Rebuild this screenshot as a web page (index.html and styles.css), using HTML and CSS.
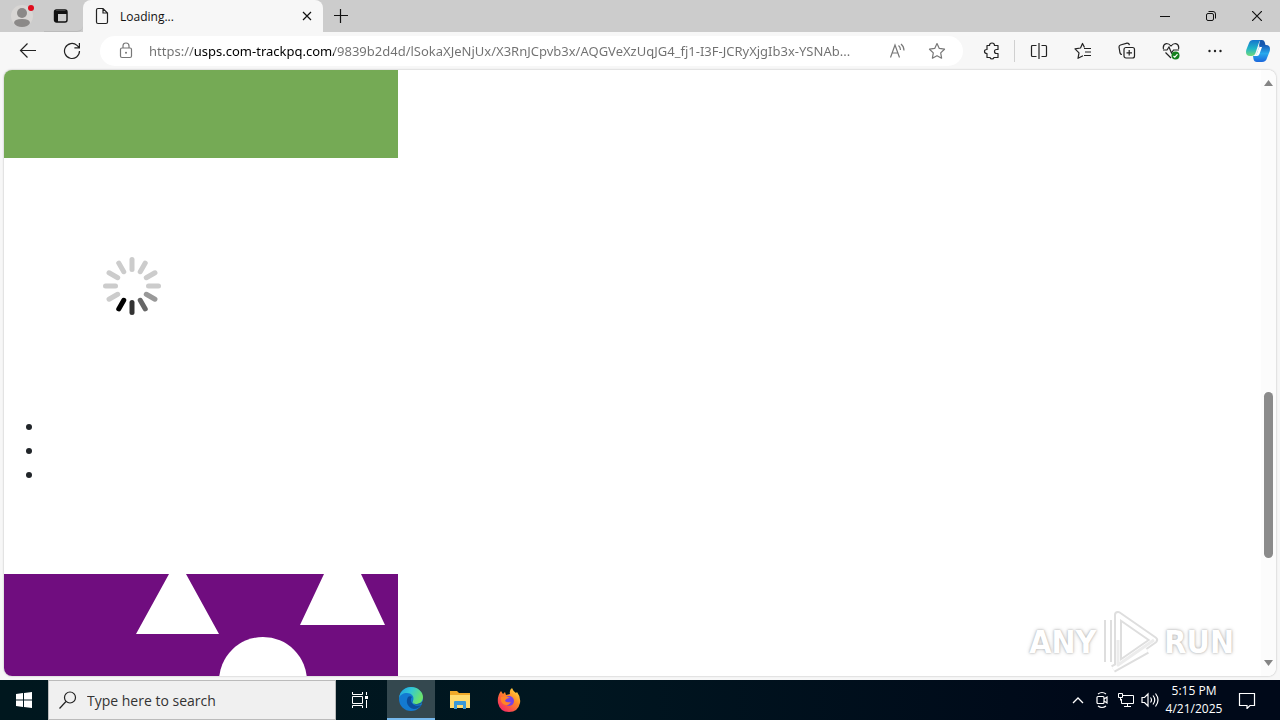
FILE: index.html
```html
<!DOCTYPE html>
<html lang="en">
<head>
<meta charset="utf-8">
<title>Loading...</title>
<link rel="stylesheet" href="styles.css">
</head>
<body>
<header class="tabstrip">
  <button class="profile" aria-label="Profile"><svg width="24" height="24" viewBox="0 0 24 24"><circle cx="11" cy="12" r="11" fill="#d8d6d4"/><circle cx="11" cy="9" r="5" fill="#8b8988"/><path d="M3 19q0-4 8-4t8 4q-2 4-8 4t-8-4" fill="#8b8988"/><circle cx="20" cy="4" r="3" fill="#e00b1c"/></svg></button>
  <button class="tab-menu" aria-label="Tab actions"><svg width="16" height="16" viewBox="0 0 16 16"><rect x="1.500" y="2" width="12.500" height="12" rx="2" fill="none" stroke="#111" stroke-width="1.400"/><path d="M2 3h12v3H5v8H2z" fill="#111"/></svg></button>
  <div class="tab">
    <svg width="14" height="18" viewBox="0 0 14 18" fill="none" stroke="#222" stroke-width="1.200"><path d="M3 1.500h5l4.500 4.500v9q0 1.500-1.500 1.500H3q-1.500 0-1.500-1.500V3q0-1.500 1.500-1.500zM8 1.500V6h4.500"/></svg>
    <span class="tab-title">Loading...</span>
    <button class="tab-close" aria-label="Close tab"><svg width="10" height="10" viewBox="0 0 10 10" stroke="#111" stroke-width="1.200"><path d="M1 1l8 8M9 1l-8 8"/></svg></button>
  </div>
  <button class="new-tab" aria-label="New tab"><svg width="14" height="14" viewBox="0 0 14 14" stroke="#111" stroke-width="1.200"><path d="M6.500 0v14M0 6.500h14"/></svg></button>
  <div class="window-controls">
    <button aria-label="Minimize"><svg width="10" height="10" viewBox="0 0 10 10" stroke="#111"><path d="M0 5.500h10"/></svg></button>
    <button aria-label="Restore"><svg width="10" height="10" viewBox="0 0 10 10" stroke="#111" fill="none"><rect x=".5" y="2.500" width="7" height="7" rx="1.500"/><path d="M2.500 .5H7q2.500 0 2.500 2.500v4.500"/></svg></button>
    <button aria-label="Close"><svg width="10" height="10" viewBox="0 0 10 10" stroke="#111" stroke-width="1.200"><path d="M0 0l10 10M10 0L0 10"/></svg></button>
  </div>
</header>
<nav class="toolbar">
  <button class="nav-button" aria-label="Back"><svg width="18" height="16" viewBox="0 0 18 16" fill="none" stroke="#222" stroke-width="1.200"><path d="M17 7.500H1.500M8.500 .5l-7 7 7 7"/></svg></button>
  <button class="nav-button" aria-label="Refresh"><svg width="18" height="18" viewBox="0 0 18 18" fill="none" stroke="#222" stroke-width="1.200"><path d="M16.500 9A7.500 7.500 0 1 1 14 3.400l2 2M16.400 1v4.800h-5"/></svg></button>
  <div class="address">
    <svg width="14" height="17" viewBox="0 0 14 17" fill="none" stroke="#777" stroke-width="1.200"><rect x="1.500" y="6" width="11" height="9.500" rx="1.500"/><path d="M4 6V4q0-3 3-3t3 3v2"/><circle cx="7" cy="10.700" r="1" fill="#777" stroke="none"/></svg>
    <input class="url" type="text" aria-label="Address" value="https://usps.com-trackpq.com/9839b2d4d/lSokaXJeNjUx/X3RnJCpvb3x/AQGVeXzUqJG4_fj1-I3F-JCRyXjgIb3x-YSNAb...">
    <button aria-label="Read aloud"><svg width="18" height="16" viewBox="0 0 18 16" fill="none" stroke="#777" stroke-width="1.200"><path d="M1.500 14.500L6 2l4.500 12.500M3 10h6M9.500 2.500q2 1.500 2 4.500M12 1q3 2.500 3 6.500"/></svg></button>
    <button aria-label="Favorite"><svg width="18" height="18" viewBox="0 0 18 18" fill="none" stroke="#777" stroke-width="1.200" stroke-linejoin="round"><path d="M9 1.500l2.300 4.900 5.200.8-3.800 3.700.9 5.300L9 13.700l-4.600 2.500.9-5.300-3.800-3.700 5.200-.8z"/></svg></button>
  </div>
  <div class="tools">
    <button class="puzzle" aria-label="Extensions"><svg width="18" height="18" viewBox="0 0 18 18" fill="none" stroke="#222" stroke-width="1.200" stroke-linejoin="round"><path d="M4 3.500h2.500q0-2.500 2.500-2.500t2.500 2.500H15v4h-1.500q-2 0-2 2t2 2H15v4h-4q-.5 1.500-2 1.500t-2-1.500H4v-4q-2.500 0-2.500-2t2.500-2z"/></svg></button>
    <button aria-label="Split screen"><svg width="18" height="18" viewBox="0 0 18 18" fill="none" stroke="#222" stroke-width="1.200"><path d="M6.500 3.500h-4q-1 0-1 1v9q0 1 1 1h4M11.500 3.500h4q1 0 1 1v9q0 1-1 1h-4M9 1v16"/></svg></button>
    <button aria-label="Favorites"><svg width="18" height="18" viewBox="0 0 18 18" fill="none" stroke="#222" stroke-width="1.200" stroke-linejoin="round"><path d="M10.500 5.500L8.500 1.500 6.500 6l-5.500.8 4 4-1 5.500 5-2.500M10 6.500h7M11 10h6M10 13.500h7"/></svg></button>
    <button aria-label="Collections"><svg width="18" height="18" viewBox="0 0 18 18" fill="none" stroke="#222" stroke-width="1.200"><path d="M4 12.500q-1.500 0-2-1.500L1 5q0-1.500 1.500-2L9 1.200q2-.2 2.500 2"/><rect x="6" y="5.500" width="10.500" height="10.500" rx="2"/><path d="M11.200 8v5.600M8.500 10.800H14"/></svg></button>
    <button aria-label="Browser essentials"><svg width="18" height="18" viewBox="0 0 18 18" fill="none" stroke="#222" stroke-width="1.200"><path d="M1.500 7q-1-4.500 3-5.500 2.500 0 4.500 2.500 2-2.500 4.500-2.500 4 1 3 5.500M3.500 10.500L9 16M1 8h4l2-3 2.500 6 2-3H17"/><circle cx="13.500" cy="13.500" r="4" fill="#15801d" stroke="none"/><path d="M11.500 14l1.300 1.200 2.700-3" stroke="#fff"/></svg></button>
    <button aria-label="Settings and more"><svg width="18" height="18" viewBox="0 0 18 18" fill="#222"><circle cx="3.500" cy="9" r="1.200"/><circle cx="9" cy="9" r="1.200"/><circle cx="14.500" cy="9" r="1.200"/></svg></button>
  </div>
  <button class="copilot" aria-label="Copilot"><svg width="24" height="24" viewBox="0 0 24 24"><defs><linearGradient id="cp1" x2="0" y2="1"><stop stop-color="#1675ce"/><stop offset=".55" stop-color="#22b6c7"/><stop offset="1" stop-color="#73da79"/></linearGradient><linearGradient id="cp2" x2="0" y2="1"><stop stop-color="#1659b7"/><stop offset=".5" stop-color="#28a9ed"/><stop offset="1" stop-color="#1b67dc"/></linearGradient></defs><path d="M14 6h6q4 0 4 4 0 2-1 4l-2 5q-1 4-5 4h-5q-3 0-3.500-3L7 17h3z" fill="url(#cp2)"/><path d="M14 1h2q2 0 2.700 2l.8 3h-4q-2 0-2.700 2z" fill="#1556ad"/><path d="M7 1h8q-2 1-2.500 4L9.500 14q-1 3-4 3H4q-4 0-4-4 0-2 1-4l2-5q1-3 4-3z" fill="url(#cp1)"/><path d="M14 8h2l-2.500 7q-.7 2-2.500 2H8q2 0 2.700-2l1.800-5q.5-2 1.500-2z" fill="#fff"/></svg></button>
</nav>
<div class="view">
  <main class="page">
    <div class="banner"></div>
    <div class="loading" role="img" aria-label="Loading">
      <svg width="60" height="60" viewBox="-30 -30 60 60" stroke-width="5" stroke-linecap="round" stroke="#ccc"><path d="M0-26.500v10"/><path d="M0-26.500v10" transform="rotate(30)"/><path d="M0-26.500v10" transform="rotate(60)"/><path d="M0-26.500v10" transform="rotate(90)"/><path d="M0-26.500v10" transform="rotate(120)" stroke="#999"/><path d="M0-26.500v10" transform="rotate(150)" stroke="#666"/><path d="M0-26.500v10" transform="rotate(180)" stroke="#333"/><path d="M0-26.500v10" transform="rotate(210)" stroke="#000"/><path d="M0-26.500v10" transform="rotate(240)"/><path d="M0-26.500v10" transform="rotate(270)"/><path d="M0-26.500v10" transform="rotate(300)"/><path d="M0-26.500v10" transform="rotate(330)"/></svg>
    </div>
    <ul class="links"><li></li><li></li><li></li></ul>
    <div class="shapes"><svg width="394" height="102" viewBox="0 0 394 102" fill="#fff"><path d="M165 0h17l33 60h-83zM320 0h37l24 51h-85z"/><circle cx="259" cy="107" r="44"/></svg></div>
  </main>
  <div class="scrollbar">
    <svg width="9" height="6" viewBox="0 0 9 6" fill="#858585"><path d="M0 6L4.500 0 9 6z"/></svg>
    <div class="track"><div class="thumb"></div></div>
    <svg width="9" height="6" viewBox="0 0 9 6" fill="#858585"><path d="M0 0h9L4.500 6z"/></svg>
  </div>
  <div class="watermark"><span>ANY</span><svg width="60" height="64" viewBox="0 0 60 64" fill="none" stroke-linejoin="round"><g stroke="#dedede" stroke-width="8"><path d="M18 5l36 25-36 25zM8 10v42M13 59l34-19"/></g><g stroke="#fff" stroke-width="4"><path d="M18 5l36 25-36 25zM8 10v42M13 59l34-19"/></g><path d="M18 30v25l36-25" stroke="#ececec" stroke-width="3"/></svg><span>RUN</span></div>
</div>
<footer class="taskbar">
  <button class="start" aria-label="Start"><svg width="16" height="16" viewBox="0 0 16 16" fill="#fff"><path d="M0 2l7-1v6.500H0zM8 1l8-1v7.500H8zM0 8.500h7V15l-7-1zM8 8.500h8V16l-8-1z"/></svg></button>
  <label class="search"><svg width="18" height="18" viewBox="0 0 18 18" fill="none" stroke="#222" stroke-width="1.200"><circle cx="11" cy="6.500" r="5.500"/><path d="M7 10.500l-6.500 7"/></svg><input type="text" placeholder="Type here to search" aria-label="Search"></label>
  <button class="task" aria-label="Task view"><svg width="18" height="18" viewBox="0 0 18 18" fill="none" stroke="#fff" stroke-width="1"><path d="M1.500 1v2.500h10V1M1.500 17v-2.500h10V17M1.500 5.500v7h10v-7zM15.500 1v3M15.500 9v8"/><path d="M14 5h3v3h-3z" fill="#fff" stroke="none"/></svg></button>
  <button class="task active" aria-label="Microsoft Edge"><svg width="24" height="24" viewBox="0 0 24 24"><defs><linearGradient id="eg" x2="1" y2=".4"><stop stop-color="#1d9fe3"/><stop offset=".5" stop-color="#33c8d5"/><stop offset="1" stop-color="#6be36c"/></linearGradient></defs><circle cx="12" cy="12" r="12" fill="#137ad1"/><path d="M0 11C1 4 6 0 12 0c7 0 12 5 12 10 0 5-4 7-7 7-3 0-4-1-3-3 2-5-2-8-6-8-4 0-7 2-8 5z" fill="url(#eg)"/><path d="M9 10c-3 5 0 11 6 12 3 0 6-2 7-4-4 2-9 0-10-4-.3-2 0-3 1-4-1-1-3-1-4 0z" fill="#0b4e9c"/><path d="M14 13q-1 4 4 4.500 3 0 5-1.500l2 2v-7q-1 6-7 6-4 0-4-2z" fill="#34484f"/></svg></button>
  <button class="task" aria-label="File Explorer"><svg width="22" height="20" viewBox="0 0 22 20"><path d="M1 1h7l2 2h11v15H1z" fill="#f0a928"/><path d="M1 5h20v13H1z" fill="#ffda6d"/><path d="M5 19v-7q0-1 1-1h10q1 0 1 1v7h-3v-4H8v4z" fill="#3998d7"/></svg></button>
  <button class="task" aria-label="Firefox"><svg width="24" height="24" viewBox="0 0 24 24"><defs><linearGradient id="ff" x1="1" x2=".2" y2="1"><stop stop-color="#fff04a"/><stop offset=".45" stop-color="#ff8a25"/><stop offset="1" stop-color="#f42468"/></linearGradient></defs><path d="M4 3l2 3 2-2 1 3 4-1q-1-4 2-6 1 3 4 5l1-1q4 5 3 11-2 9-11 9T1 15Q0 8 4 3z" fill="url(#ff)"/><circle cx="12" cy="13" r="5" fill="#7542e5"/><path d="M4 9q5-2 9 1-4 0-5 3 2 2 6 1-3 5-8 2-3-3-2-7z" fill="#ff8427"/></svg></button>
  <div class="tray">
    <button aria-label="Show hidden icons"><svg width="12" height="8" viewBox="0 0 12 8" fill="none" stroke="#fff" stroke-width="1.300"><path d="M1 7l5-5 5 5"/></svg></button>
    <button aria-label="Meet now"><svg width="14" height="18" viewBox="0 0 14 18" fill="none" stroke="#fff" stroke-width="1.200"><rect x="2" y="5.500" width="7" height="7" rx="1"/><path d="M9 8l3-2v6l-3-2M3 3q4-3 8 0M3 15q4 3 8 0"/></svg></button>
    <button aria-label="Network"><svg width="18" height="16" viewBox="0 0 18 16" fill="none" stroke="#fff" stroke-width="1"><path d="M6 3.500h10.500v8h-12V7M10.500 11.500v3M7 14.500h7M1.500 1.500h4v4h-4zM3.500 5.500v3"/></svg></button>
    <button aria-label="Volume"><svg width="18" height="16" viewBox="0 0 18 16" fill="none" stroke="#fff" stroke-width="1.200"><path d="M1 5.500h2.500L7 2v12l-3.500-3.500H1zM9.500 5.500q2 2.500 0 5M12 3.500q3.500 4.500 0 9M14.500 1.500q5 6.500 0 13"/></svg></button>
    <time class="clock" datetime="2025-04-21T17:15"><span>5:15 PM</span><span>4/21/2025</span></time>
    <button class="notifications" aria-label="Notifications"><svg width="18" height="17" viewBox="0 0 18 17" fill="none" stroke="#fff" stroke-width="1.200"><path d="M1.500 1.500h15v12H12l-3 3v-3H1.500z"/></svg></button>
  </div>
</footer>
</body>
</html>
```
FILE: styles.css
```css
* { box-sizing: border-box; }
body {
  margin: 0;
  height: 100vh;
  display: flex;
  flex-direction: column;
  overflow: hidden;
  background: #f7f7f7;
  color: #111;
  font-family: "Noto Sans", "Open Sans", sans-serif;
  font-size: 12px;
}
button {
  display: flex;
  align-items: center;
  justify-content: center;
  padding: 0;
  border: 0;
  background: none;
}
svg { display: block; flex: none; }
input { font-family: inherit; border: 0; outline: 0; min-width: 0; }

.tabstrip { display: flex; height: 32px; background: #ccc; flex: none; }
.profile { width: 44px; padding-left: 2px; }
.tab-menu { width: 39px; padding-right: 6px; border-bottom: 1px solid #bbb; border-radius: 0 0 6px 0; }
.tab {
  display: flex;
  align-items: center;
  width: 240px;
  padding: 0 10px 0 12px;
  gap: 11px;
  background: #f7f7f7;
  border-radius: 8px 8px 0 0;
}
.tab-title { flex: 1; font-family: "Open Sans", sans-serif; }
.tab-close { width: 12px; height: 20px; }
.new-tab { width: 36px; }
.window-controls { display: flex; margin-left: auto; }
.window-controls button { width: 46px; }

.toolbar { display: flex; align-items: center; height: 38px; flex: none; padding: 0 1px 1px 6px; }
.nav-button { width: 44px; height: 32px; }
.address {
  flex: 1;
  display: flex;
  align-items: center;
  height: 30px;
  margin-left: 6px;
  padding: 0 17px 0 19px;
  border-radius: 15px;
  background: #fff;
}
.url {
  flex: 1;
  margin-left: 16px;
  padding: 0;
  font-size: 13px;
  line-height: 20px;
  color: #666;
  -webkit-text-fill-color: transparent;
  background: linear-gradient(90deg, #707070 45px, #000 45px, #000 185px, #707070 185px);
  -webkit-background-clip: text;
  background-clip: text;
}
.address button { width: 18px; margin-left: 21px; }
.address .url + button { margin-left: 14px; }
.tools { display: flex; margin-left: 6px; }
.tools button { width: 44px; height: 22px; }
.tools .puzzle { width: 46px; margin-right: 2px; border-right: 1px solid #d0d0d0; }
.copilot { width: 42px; }

.view {
  position: relative;
  flex: 1;
  min-height: 0;
  display: flex;
  margin: 0 4px 4px;
  border-radius: 8px;
  background: #fff;
  box-shadow: 0 0 2px #aaa;
  overflow: hidden;
}
.page { flex: 1; overflow: hidden; }
.banner { width: 394px; height: 88px; background: #75aa55; }
.loading { padding: 98px; }
.links {
  margin: 0;
  padding: 0 0 0 40px;
  font-size: 16px;
  line-height: 24px;
  color: #212529;
}
.links li { height: 24px; }
.shapes { width: 394px; margin-top: 88px; background: #700d7f; }
.scrollbar {
  width: 15px;
  padding: 10px 0;
  display: flex;
  flex-direction: column;
  align-items: center;
  background: #fcfcfc;
}
.track { flex: 1; display: flex; flex-direction: column; padding-top: 306px; }
.thumb { width: 9px; height: 166px; border-radius: 5px; background: #8b8b8b; }
.watermark {
  position: absolute;
  right: 42px;
  bottom: 2px;
  display: flex;
  align-items: center;
  gap: 4px;
  color: #fff;
  font: bold 32px "DejaVu Sans Condensed", "Noto Sans", sans-serif;
  text-shadow: 0 0 2px #aaa, 0 0 4px #ccc;
}

.taskbar {
  display: flex;
  align-items: stretch;
  height: 40px;
  flex: none;
  background: linear-gradient(90deg, #00171e, #001620 45%, #000919 85%);
  color: #fff;
  font-family: "Open Sans", sans-serif;
}
.start { width: 48px; }
.search {
  display: flex;
  align-items: center;
  gap: 10px;
  width: 288px;
  padding-left: 10px;
  background: #f0f0f0;
  border: 1px solid #bbb;
}
.search input { flex: 1; padding: 0; background: none; font-size: 14px; }
.search input::placeholder { color: #333; opacity: 1; }
.task { width: 49px; }
.search + .task { width: 51px; padding-right: 3px; }
.task.active { width: 48px; background: #34484f; border-bottom: 2px solid #76b9ed; }
.tray { display: flex; margin-left: auto; padding-right: 12px; }
.tray button { width: 24px; }
.clock {
  display: flex;
  flex-direction: column;
  justify-content: center;
  width: 64px;
  text-align: center;
  line-height: 18px;
}
.tray .notifications { width: 42px; }
```
